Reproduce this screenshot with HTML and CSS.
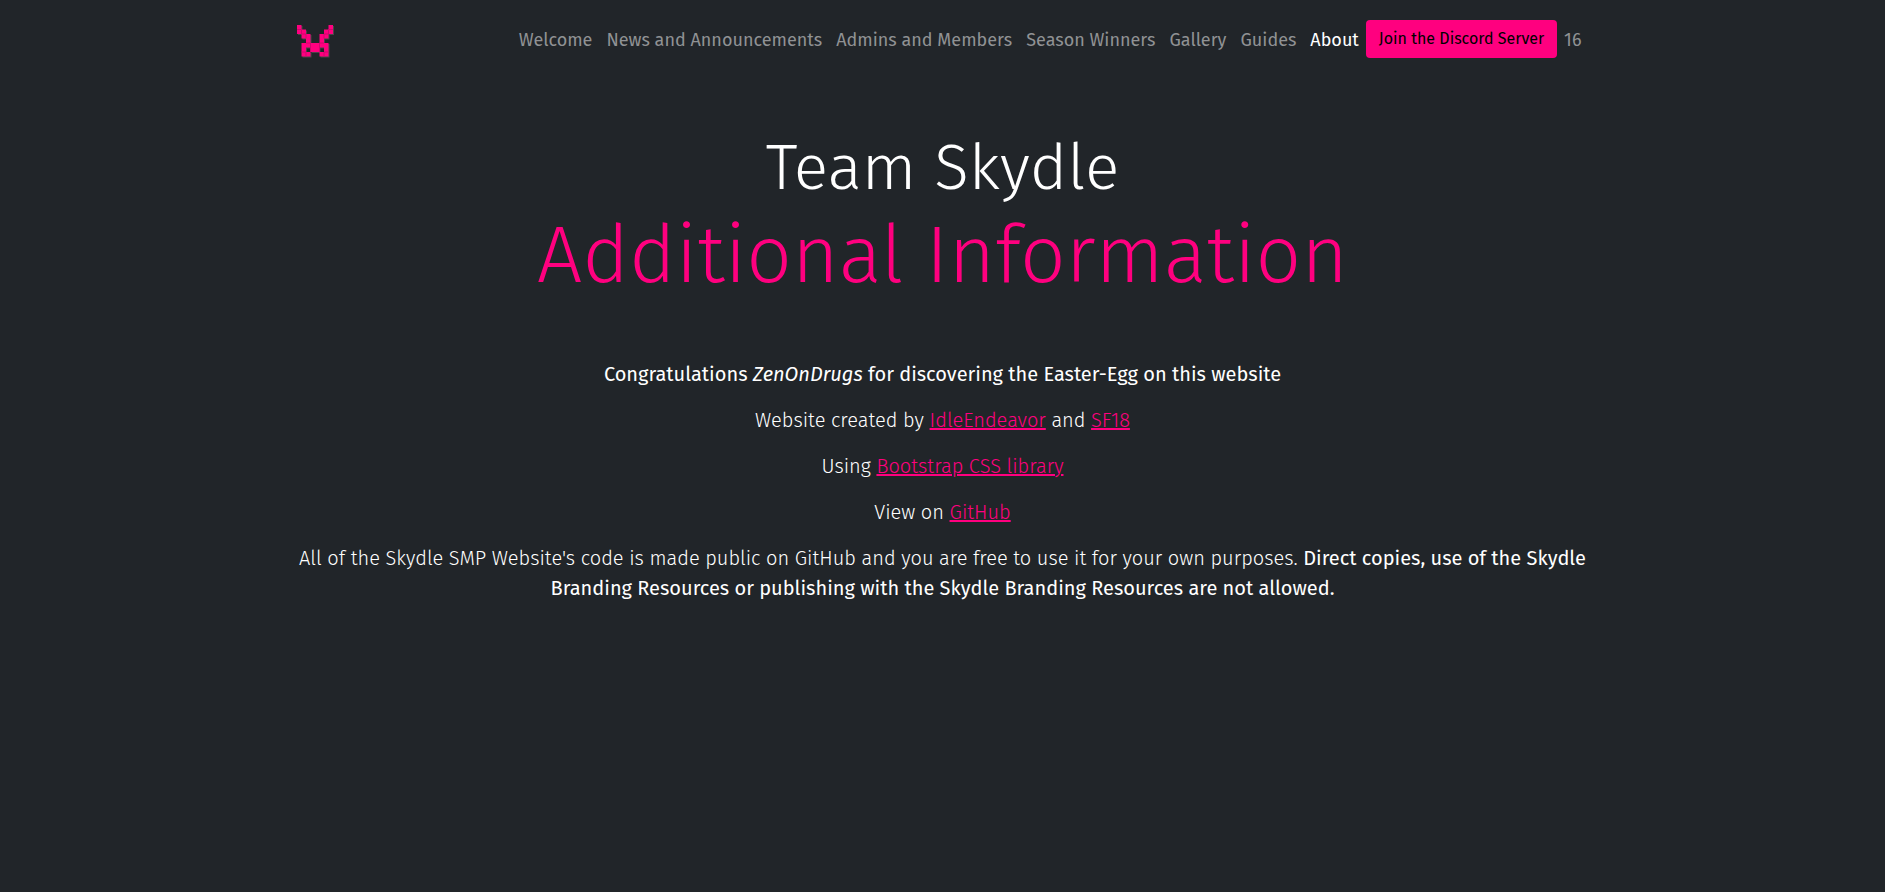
FILE: index.html
```html
<!DOCTYPE html>
<html lang="en">
<head>
<meta charset="utf-8">
<meta name="viewport" content="width=device-width, initial-scale=1">
<title>Team Skydle - Additional Information</title>
<link rel="stylesheet" href="styles.css">
</head>
<body>
<header class="navbar container">
  <a class="brand" href="#" aria-label="Skydle home">
    <svg class="logo" viewBox="0 0 37 33" aria-hidden="true">
      <path class="logo-shadow" transform="translate(1 1)" d="M0 0H4.5V4.5H9V9H13.5V18H22.5V9H27V4.5H31.5V0H36V9H31.5V13.5H27V18H31.5V31.5H22.5V27H13.5V31.5H4.5V18H9V13.5H4.5V9H0ZM9 22.5V27H13.5V22.5ZM22.5 22.5V27H27V22.5Z"/>
      <path class="logo-mark" d="M0 0H4.5V4.5H9V9H13.5V18H22.5V9H27V4.5H31.5V0H36V9H31.5V13.5H27V18H31.5V31.5H22.5V27H13.5V31.5H4.5V18H9V13.5H4.5V9H0ZM9 22.5V27H13.5V22.5ZM22.5 22.5V27H27V22.5Z"/>
      <path class="logo-grid" d="M0 4.5H4.5V9M31.5 9V4.5H36M4.5 9H9V13.5M27 13.5V9H31.5M9 18H13.5V27M22.5 27V18H27M4.5 27H9V31.5M27 31.5V27H31.5"/>
    </svg>
  </a>
  <nav class="menu" aria-label="Main">
    <a class="nav-link" href="#">Welcome</a>
    <a class="nav-link" href="#">News and Announcements</a>
    <a class="nav-link" href="#">Admins and Members</a>
    <a class="nav-link" href="#">Season Winners</a>
    <a class="nav-link" href="#">Gallery</a>
    <a class="nav-link" href="#">Guides</a>
    <a class="nav-link active" href="#" aria-current="page">About</a>
    <button class="btn" type="button">Join the Discord Server</button>
    <span class="nav-link">16</span>
  </nav>
</header>
<main class="container content">
  <h1 class="heading"><span class="team">Team Skydle</span><span class="title">Additional Information</span></h1>
  <div class="lead">
    <p><strong>Congratulations <em>ZenOnDrugs</em> for discovering the Easter-Egg on this website</strong></p>
    <p>Website created by <a href="#">IdleEndeavor</a> and <a href="#">SF18</a></p>
    <p>Using <a href="#">Bootstrap CSS library</a></p>
    <p>View on <a href="#">GitHub</a></p>
    <p>All of the Skydle SMP Website's code is made public on GitHub and you are free to use it for your own purposes. <strong>Direct copies, use of the Skydle Branding Resources or publishing with the Skydle Branding Resources are not allowed.</strong></p>
  </div>
</main>
</body>
</html>
```
FILE: styles.css
```css
* { box-sizing: border-box; }
body {
  margin: 0;
  background: #212529;
  color: #fff;
  font-family: "Fira Sans", "Open Sans", sans-serif;
  font-size: 16px;
  line-height: 24px;
}
.container {
  width: 100%;
  max-width: 1320px;
  margin: 0 auto;
  padding: 0 12px;
}
.navbar {
  display: flex;
  align-items: center;
  justify-content: space-between;
  height: 80px;
}
.brand { padding: 5px 2px 2px; }
.logo { display: block; width: 37px; height: 33px; }
.logo-mark { fill: #ff007f; fill-rule: evenodd; }
.logo-shadow { fill: #4b4649; fill-rule: evenodd; }
.logo-grid { fill: none; stroke: #d0066e; stroke-width: 1; }
.menu { display: flex; align-items: flex-start; padding-right: 2px; }
.nav-link {
  padding: 8px 7px;
  color: #909294;
  font-size: 18px;
  text-decoration: none;
  white-space: nowrap;
}
.nav-link.active { color: #fff; }
.btn {
  height: 38px;
  padding: 0 13px;
  border: 0;
  border-radius: 4px;
  background: #ff007f;
  color: #000;
  font: inherit;
  white-space: nowrap;
}
.content { text-align: center; }
.heading {
  margin: 49px 0 56px;
  font-weight: 300;
}
.team, .title { display: block; }
.team { font-size: 64px; line-height: 78px; }
.title { font-size: 80px; line-height: 96px; color: #ff007f; }
.lead { font-size: 20px; line-height: 30px; font-weight: 300; }
.lead p { margin: 0 0 16px; }
.lead strong { font-weight: 400; }
.lead a { color: #ff007f; }
```
